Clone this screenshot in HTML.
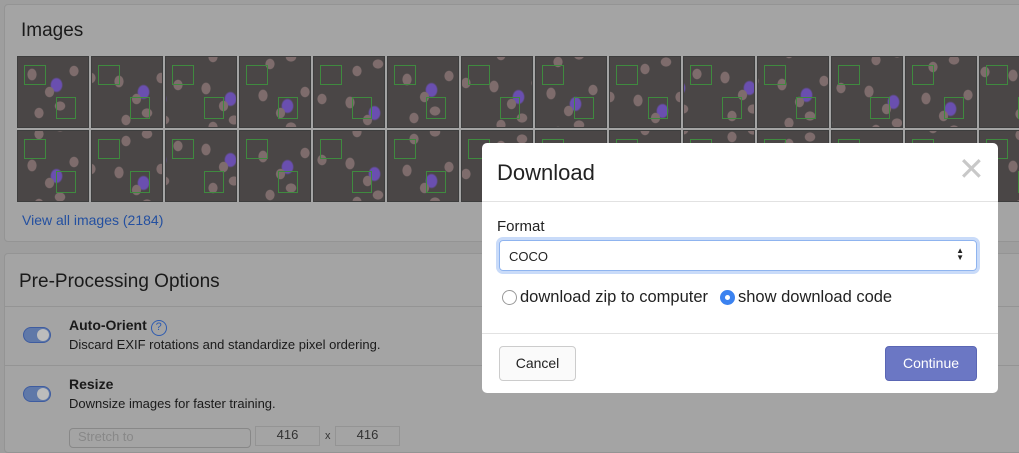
<!DOCTYPE html>
<html><head><meta charset="utf-8"><style>
*{box-sizing:border-box}
body{margin:0;width:1019px;height:440px;overflow:hidden;background:#9e9e9e;font-family:"Liberation Sans",sans-serif;position:relative}
.card{position:absolute;left:4px;right:-10px;background:#a4a4a4;border:1px solid #949494;border-radius:4px}
.tile{position:absolute;width:70px;height:70px;background:
radial-gradient(ellipse 7px 9px at 20% 25%,#7e6c6c 60%,transparent 70%),
radial-gradient(ellipse 8px 7px at 60% 70%,#7e6c6c 60%,transparent 70%),
radial-gradient(ellipse 7px 8px at 80% 20%,#7e6c6c 60%,transparent 70%),
radial-gradient(ellipse 7px 8px at 30% 80%,#7e6c6c 60%,transparent 70%),
radial-gradient(ellipse 7px 8px at 45% 50%,#7e6c6c 60%,transparent 70%),
radial-gradient(ellipse 10px 12px at 55% 40%,#6a4fb0 50%,transparent 65%),
#4a4646;outline:1px solid #3d3d3d}
.tile:after{content:"";position:absolute;left:6px;top:8px;width:20px;height:18px;border:1px solid #3f8a3f}
.tile:before{content:"";position:absolute;left:38px;top:40px;width:18px;height:20px;border:1px solid #3f8a3f}
.modal{position:absolute;left:482px;top:143px;width:516px;height:250px;background:#fff;border-radius:5px}
.tog{position:absolute;left:23px;width:28px;height:16px;border-radius:8px;background:#5f78a8;border:1px solid #3e5ca0}
.tog:after{content:"";position:absolute;right:1px;top:1px;width:12px;height:12px;border-radius:50%;background:#bcbcbc}
</style></head><body>
<div class="card" style="top:4px;height:238px">
<div style="position:absolute;left:16px;top:15px;font-size:19px;color:#1a1a1a">Images</div>
<div style="position:absolute;left:17px;top:207px;font-size:14px;color:#2450a0">View all images (2184)</div>
</div>
<div id="tiles"></div>
<div class="card" style="top:253px;height:200px">
<div style="position:absolute;left:14px;top:17px;font-size:19px;color:#1a1a1a">Pre-Processing Options</div>
<div style="position:absolute;left:0;right:0;top:52px;border-top:1px solid #949494"></div>
<div style="position:absolute;left:0;right:0;top:111px;border-top:1px solid #949494"></div>
</div>
<div class="tog" style="top:327px"></div>
<div class="tog" style="top:386px"></div>
<div style="position:absolute;left:69px;top:317px;font-size:14px;font-weight:bold;color:#1a1a1a">Auto-Orient <span style="display:inline-block;width:16px;height:16px;border:1.5px solid #2f5cb0;border-radius:50%;color:#2f5cb0;font-size:11px;text-align:center;line-height:13px;font-weight:normal">?</span></div>
<div style="position:absolute;left:69px;top:337px;font-size:13px;color:#1a1a1a">Discard EXIF rotations and standardize pixel ordering.</div>
<div style="position:absolute;left:69px;top:376px;font-size:14px;font-weight:bold;color:#1a1a1a">Resize</div>
<div style="position:absolute;left:69px;top:396px;font-size:13px;color:#1a1a1a">Downsize images for faster training.</div>
<div style="position:absolute;left:69px;top:428px;width:182px;height:20px;border:1px solid #888;border-radius:4px;font-size:13px;color:#888;padding-left:8px">Stretch to</div>
<div style="position:absolute;left:255px;top:426px;width:65px;height:20px;border:1px solid #949494;font-size:13px;color:#333;text-align:center">416</div>
<div style="position:absolute;left:325px;top:430px;font-size:11px;color:#333">x</div>
<div style="position:absolute;left:335px;top:426px;width:65px;height:20px;border:1px solid #949494;font-size:13px;color:#333;text-align:center">416</div>
<div class="modal">
<div style="position:absolute;left:15px;top:17px;font-size:22px;color:#222">Download</div>
<div style="position:absolute;left:476px;top:10px;font-size:32px;color:#c8c8c8;line-height:32px">✕</div>
<div style="position:absolute;left:0;right:0;top:58px;border-top:1px solid #e2e2e2"></div>
<div style="position:absolute;left:15px;top:75px;font-size:15px;color:#222">Format</div>
<div style="position:absolute;left:17px;top:97px;width:478px;height:31px;border:1px solid #8fb4ef;border-radius:4px;box-shadow:0 0 0 3px #c9dbf9;font-size:13px;color:#222;padding:8px 9px">COCO<span style="position:absolute;right:12px;top:6px;font-size:8px;line-height:7px">▲<br>▼</span></div>
<div style="position:absolute;left:20px;top:147px;width:15px;height:15px;border:1px solid #999;border-radius:50%"></div>
<div style="position:absolute;left:38px;top:145px;font-size:16.5px;color:#222">download zip to computer</div>
<div style="position:absolute;left:238px;top:147px;width:15px;height:15px;border-radius:50%;background:#3b82f0"><div style="position:absolute;left:5px;top:5px;width:5px;height:5px;border-radius:50%;background:#fff"></div></div>
<div style="position:absolute;left:256px;top:145px;font-size:16.5px;color:#222">show download code</div>
<div style="position:absolute;left:0;right:0;top:190px;border-top:1px solid #e2e2e2"></div>
<div style="position:absolute;left:17px;top:203px;width:77px;height:35px;border:1px solid #ccc;border-radius:4px;background:#fafafa;font-size:14px;color:#222;text-align:center;line-height:33px">Cancel</div>
<div style="position:absolute;left:403px;top:203px;width:92px;height:35px;border:1px solid #5a66b4;border-radius:4px;background:#6b77c4;font-size:14px;color:#fff;text-align:center;line-height:33px">Continue</div>
</div>
<script>
var h='';for(var r=0;r<2;r++)for(var c=0;c<14;c++){h+='<div class="tile" style="left:'+(18+74*c)+'px;top:'+(57+74*r)+'px;background-position:'+(c*13%30)+'px '+(r*17+c*7)%30+'px"></div>';}
document.getElementById('tiles').innerHTML=h;
</script>
</body></html>
